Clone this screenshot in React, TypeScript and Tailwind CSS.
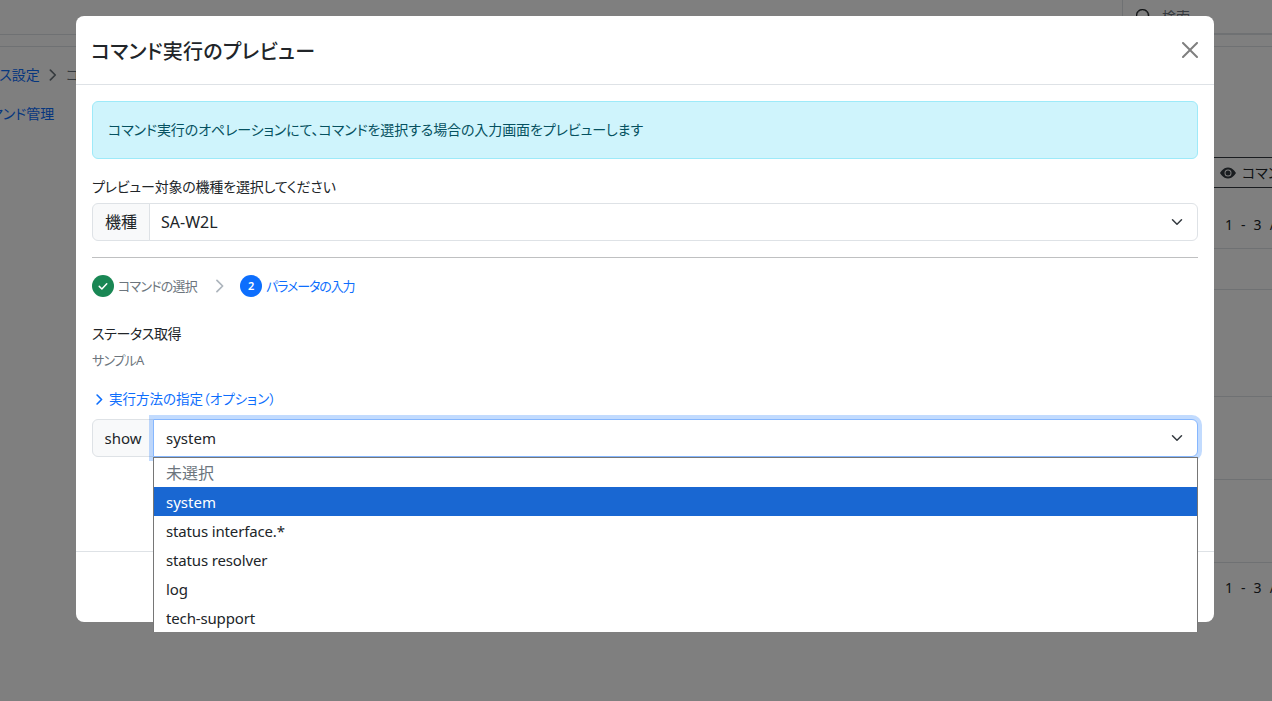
const options = ['status interface.*', 'status resolver', 'log', 'tech-support']

const Chevron = () => (
  <svg viewBox="0 0 16 16" className="h-3 w-3 shrink-0" fill="none" stroke="#343a40" strokeWidth="2" strokeLinecap="round" strokeLinejoin="round">
    <path d="m2 5 6 6 6-6" />
  </svg>
)

const CloseIcon = () => (
  <svg viewBox="0 0 16 16" className="h-4 w-4" fill="#000" fillOpacity="0.5">
    <path d="M.293.293a1 1 0 0 1 1.414 0L8 6.586 14.293.293a1 1 0 1 1 1.414 1.414L9.414 8l6.293 6.293a1 1 0 0 1-1.414 1.414L8 9.414l-6.293 6.293a1 1 0 0 1-1.414-1.414L6.586 8 .293 1.707a1 1 0 0 1 0-1.414z" />
  </svg>
)

const Background = () => (
  <div className="h-[701px] overflow-hidden bg-white text-[#212529]">
    <div className="h-[35px] border-b border-[#dee2e6]">
      <div className="ml-[1122px] flex h-[34px] items-center gap-[10px] rounded-bl border-b border-l border-[#dee2e6] pl-[13px]">
        <svg viewBox="0 0 16 16" className="h-[16px] w-[16px]" fill="#212529" stroke="#212529" strokeWidth="0.5">
          <path d="M11.742 10.344a6.5 6.5 0 1 0-1.397 1.398l3.85 3.85a1 1 0 0 0 1.415-1.414zM12 6.5a5.5 5.5 0 1 1-11 0 5.5 5.5 0 0 1 11 0" />
        </svg>
        <span className="text-sm text-[#6c757d]">検索</span>
      </div>
    </div>
    <div className="h-3 border-b border-[#dee2e6]" />
    <div className="-ml-[39px] mt-4 flex h-6 items-center gap-[7px] text-sm whitespace-nowrap">
      <span className="text-[#0d6efd]">デバイス設定</span>
      <svg viewBox="0 0 16 16" className="h-3 w-3" fill="none" stroke="#6c757d" strokeWidth="2.2" strokeLinecap="round" strokeLinejoin="round">
        <path d="m4.5 1.5 6.5 6.5-6.5 6.5" />
      </svg>
      <span className="text-[#6c757d]">コマンド管理</span>
    </div>
    <div className="-ml-[23px] mt-[17px] text-sm text-[#0d6efd]">コマンド管理</div>
    <div className="ml-[1214px] mt-[33px] w-[58px] overflow-hidden whitespace-nowrap text-sm">
      <div className="flex h-[31px] items-center gap-1.5 border-y border-[#343a40] pl-1.5">
        <svg viewBox="0 0 16 16" className="h-4 w-4 shrink-0" fill="#343a40">
          <path d="M10.5 8a2.5 2.5 0 1 1-5 0 2.5 2.5 0 0 1 5 0" />
          <path d="M0 8s3-5.5 8-5.5S16 8 16 8s-3 5.5-8 5.5S0 8 0 8m8 3.5a3.5 3.5 0 1 0 0-7 3.5 3.5 0 0 0 0 7" />
        </svg>
        <span>コマンド</span>
      </div>
      <div className="flex h-[61px] items-center border-b border-[#dee2e6] pl-[11px] pt-[14px] tracking-[2.2px]">1 - 3 / 3</div>
      <div className="h-[41px] border-b border-[#dee2e6]" />
      <div className="h-[107px] border-b border-[#dee2e6]" />
      <div className="h-[83px] border-b border-[#dee2e6]" />
      <div className="h-[83px] border-b border-[#dee2e6]" />
      <div className="flex h-[50px] items-center pl-[11px] tracking-[2.2px]">1 - 3 / 3</div>
    </div>
  </div>
)

export default function App() {
  return (
    <div className="relative h-[701px] overflow-hidden font-['Noto_Sans','Noto_Sans_CJK_JP',sans-serif] [font-feature-settings:'palt']">
      <Background />
      <div className="absolute inset-0 bg-black/50" />
      <div className="absolute left-[76px] top-4 flex h-[606px] w-[1138px] flex-col rounded-lg bg-white text-[#212529]">
        <div className="flex h-[69px] shrink-0 items-center justify-between border-b border-[#dee2e6] pl-[15px] pr-4">
          <h5 className="pt-[3px] text-xl font-medium leading-normal tracking-[0.3px]">コマンド実行のプレビュー</h5>
          <button aria-label="close">
            <CloseIcon />
          </button>
        </div>

        <div className="relative flex-1 p-4">
          <div className="h-[58px] rounded-md border border-[#9eeaf9] bg-[#cff4fc] px-[15px] py-[16px] text-sm leading-6 tracking-[-0.1px] text-[#055160]">
            コマンド実行のオペレーションにて、コマンドを選択する場合の入力画面をプレビューします
          </div>

          <div className="mt-4 mb-1 text-sm leading-6 tracking-[-0.2px]">プレビュー対象の機種を選択してください</div>
          <div className="flex h-[38px]">
            <div className="flex w-[58px] items-center justify-center rounded-l-md border border-[#dee2e6] bg-[#f8f9fa] text-base">機種</div>
            <div className="-ml-px flex flex-1 items-center justify-between rounded-r-md border border-[#dee2e6] pl-[11px] pr-[14px] text-base">
              <span>SA-W2L</span>
              <Chevron />
            </div>
          </div>

          <hr className="my-4 border-[#bfc0c1]" />

          <div className="mt-[17px] flex h-[22px] items-center text-[13px]">
            <span className="flex h-[22px] w-[22px] items-center justify-center rounded-full bg-[#198754]">
              <svg viewBox="0 0 16 16" className="h-3 w-3" fill="none" stroke="#fff" strokeWidth="2" strokeLinecap="round" strokeLinejoin="round">
                <path d="m3 8.5 3.5 3.5 6.5-7" />
              </svg>
            </span>
            <span className="ml-1 pt-px tracking-[-0.75px] text-[#6c757d]">コマンドの選択</span>
            <svg viewBox="0 0 16 16" className="ml-4 h-[14px] w-[14px]" fill="none" stroke="#adb5bd" strokeWidth="2" strokeLinecap="round" strokeLinejoin="round">
              <path d="m4.5 1.5 6.5 6.5-6.5 6.5" />
            </svg>
            <span className="ml-[13px] flex h-[22px] w-[22px] items-center justify-center rounded-full bg-[#0d6efd] text-[11px] font-semibold text-white">2</span>
            <span className="ml-1 pt-px tracking-[-1.1px] text-[#0d6efd]">パラメータの入力</span>
          </div>

          <div className="mt-[25px] text-sm leading-6 tracking-[-0.4px]">ステータス取得</div>
          <div className="mt-[4px] text-[13px] leading-[21px] tracking-[-0.9px] text-[#6c757d]">サンプルA</div>

          <div className="mt-[16px] flex h-6 items-center gap-1 pl-[2px] text-[13.5px] text-[#0d6efd]">
            <svg viewBox="0 0 16 16" className="h-[11px] w-[11px]" fill="none" stroke="#0d6efd" strokeWidth="2.4" strokeLinecap="round" strokeLinejoin="round">
              <path d="m4.5 1.5 6.5 6.5-6.5 6.5" />
            </svg>
            <span>実行方法の指定（オプション）</span>
          </div>

          <div className="mt-2 flex h-[38px]">
            <div className="flex w-[62px] items-center justify-center rounded-l-md border border-[#dee2e6] bg-[#f8f9fa] text-[15px]">show</div>
            <div className="relative z-10 -ml-px flex flex-1 items-center justify-between rounded-r-md border border-[#86b7fe] bg-white pl-3 pr-[14px] text-[15px] shadow-[0_0_0_4px_rgba(13,110,253,0.25)]">
              <span>system</span>
              <Chevron />
            </div>
          </div>

          <div className="absolute left-[77px] top-[372px] z-20 h-[175px] w-[1045px] overflow-hidden border-x border-t border-[#767676] bg-white text-[15px] leading-[31px]">
            <div className="h-[29px] pl-3 text-base leading-[30px] text-[#6c757d]">未選択</div>
            <div className="h-[29px] bg-[#1967d2] pl-3 text-white">system</div>
            {options.map((option) => (
              <div key={option} className="h-[29px] pl-3 tracking-[-0.15px]">{option}</div>
            ))}
          </div>
        </div>

        <div className="h-[71px] shrink-0 border-t border-[#dee2e6]" />
      </div>
    </div>
  )
}
